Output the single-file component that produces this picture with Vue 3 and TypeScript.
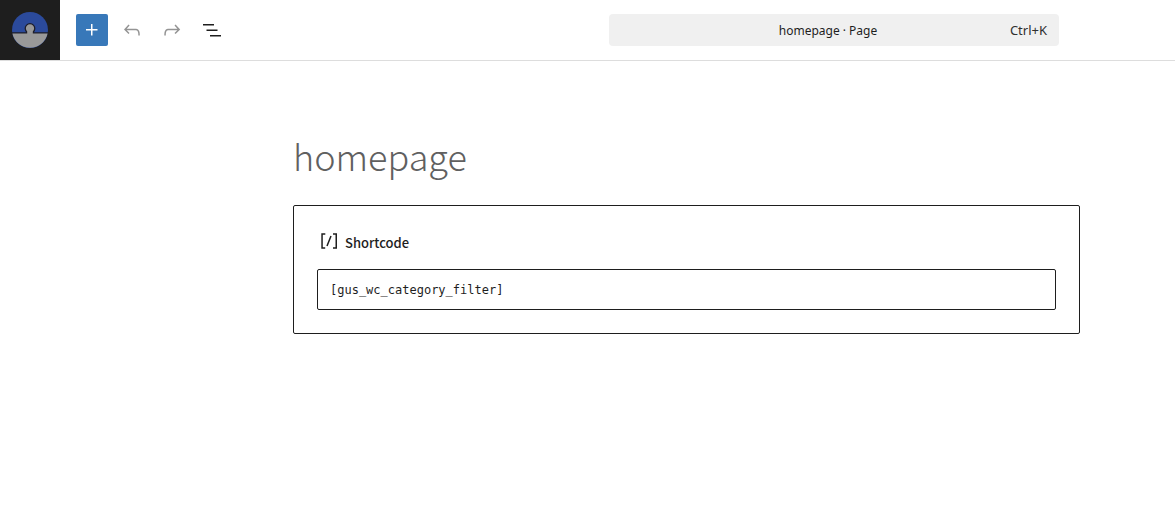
<script setup lang="ts">
import { ref } from 'vue'

const title = ref('homepage')
const shortcode = ref('[gus_wc_category_filter]')

const tools = [
  {
    label: 'Undo',
    disabled: true,
    path: 'M18.3 11.7c-.6-.6-1.4-.9-2.3-.9H6.7l2.9-3.3-1.1-1-4.5 5L8.5 16l1-1-2.7-2.7H16c.5 0 .9.2 1.3.5 1 1 1 3.4 1 4.5v.3h1.5v-.2c0-1.5 0-4.3-1.5-5.7z',
  },
  {
    label: 'Redo',
    disabled: true,
    path: 'M15.6 6.5l-1.1 1 2.9 3.3H8c-.9 0-1.7.3-2.3.9-1.4 1.5-1.4 4.2-1.4 5.6v.2h1.5v-.3c0-1.1 0-3.5 1-4.5.3-.3.7-.5 1.3-.5h9.2L14.5 15l1.1 1.1 4.6-4.6-4.6-5z',
  },
  {
    label: 'Document Overview',
    disabled: false,
    path: 'M3 6h11v1.5H3V6Zm3.5 5.5h11V13h-11v-1.5ZM21 17H10v1.5h11V17Z',
  },
]
</script>

<template>
  <div class="editor">
    <header class="bar">
      <a class="site" href="#" aria-label="View pages">
        <svg width="36" height="36" viewBox="0 0 36 36" aria-hidden="true">
          <circle cx="18" cy="18" r="18" fill="#2b4a9b" />
          <path d="M0 21.5H15.2V19.4a4.1 4.1 0 1 1 5.6 0V21.5H36" fill="none" stroke="#1e1e2a" stroke-width="2.6" />
          <path d="M.4 21.6H15.2V19.4a4.1 4.1 0 1 1 5.6 0V21.6H35.6A18 18 0 0 1 .4 21.6z" fill="#999" />
        </svg>
      </a>
      <div class="tools">
        <button class="tool add" type="button" aria-label="Block Inserter">
          <svg width="24" height="24" viewBox="0 0 24 24" aria-hidden="true">
            <path d="M11 12.5V17.5H12.5V12.5H17.5V11H12.5V6H11V11H6V12.5H11Z" />
          </svg>
        </button>
        <button v-for="tool in tools" :key="tool.label" class="tool" type="button" :aria-label="tool.label" :disabled="tool.disabled">
          <svg width="24" height="24" viewBox="0 0 24 24" aria-hidden="true">
            <path :d="tool.path" />
          </svg>
        </button>
      </div>
      <button class="command" type="button">
        <span class="document">{{ title }} · Page</span>
        <span class="shortcut">Ctrl+K</span>
      </button>
    </header>
    <main class="canvas">
      <h1 class="title">{{ title }}</h1>
      <section class="block">
        <label class="label" for="shortcode">
          <svg width="24" height="24" viewBox="0 0 24 24" aria-hidden="true">
            <path d="M16 4.2v1.5h2.5v12.5H16v1.5h4V4.2h-4zM4.2 19.8h4v-1.5H5.8V5.8h2.5V4.2h-4v15.6zm5.1-3.1l1.4.6 4-10-1.4-.6-4 10z" />
          </svg>
          <span class="name">Shortcode</span>
        </label>
        <input id="shortcode" v-model="shortcode" class="field" type="text" spellcheck="false" />
      </section>
    </main>
  </div>
</template>

<style>
body {
  margin: 0;
  background: #fff;
}
</style>

<style scoped>
.editor {
  color: #1e1e1e;
  font-family: "Noto Sans", "Open Sans", sans-serif;
  font-size: 13px;
}

.editor * {
  box-sizing: border-box;
}

.bar {
  display: flex;
  align-items: center;
  height: 61px;
  padding-right: 116px;
  border-bottom: 1px solid #ddd;
}

.site {
  display: flex;
  align-items: center;
  justify-content: center;
  width: 60px;
  height: 60px;
  background: #1e1e1e;
}

.tools {
  display: flex;
  gap: 8px;
  margin: 0 auto 0 16px;
}

.tool {
  display: flex;
  align-items: center;
  justify-content: center;
  width: 32px;
  height: 32px;
  padding: 0;
  border: 0;
  border-radius: 2px;
  background: none;
  color: #1e1e1e;
}

.tool:disabled {
  color: #949494;
}

.tool.add {
  background: #3878b9;
  color: #fff;
}

svg {
  display: block;
  fill: currentColor;
}

.command {
  display: grid;
  grid-template-columns: 1fr auto 1fr;
  align-items: center;
  width: 450px;
  height: 32px;
  padding: 0 12px 0 0;
  border: 0;
  border-radius: 4px;
  background: #f0f0f0;
  color: #1e1e1e;
  font: inherit;
}

.document {
  grid-column: 2;
  font-size: 12px;
}

.shortcut {
  justify-self: end;
  color: #2f2f2f;
}

.canvas {
  padding: 72px 95px 72px 293px;
}

.title {
  margin: 0 0 28px;
  color: #606060;
  font-family: "Noto Sans CJK SC", "Noto Sans", sans-serif;
  font-size: 36px;
  font-weight: 200;
  line-height: 44px;
}

.block {
  padding: 23px;
  border: 1px solid #1e1e1e;
  border-radius: 2px;
}

.label {
  display: flex;
  align-items: center;
  gap: 4px;
  height: 24px;
  margin-bottom: 16px;
  font-family: "Noto Sans CJK SC", "Noto Sans", sans-serif;
  font-weight: 500;
}

.name {
  padding-top: 2px;
}

.field {
  display: block;
  width: 100%;
  height: 41px;
  padding: 0 12px;
  border: 1px solid #1e1e1e;
  border-radius: 2px;
  background: #fff;
  color: #1e1e1e;
  font-family: "DejaVu Sans Mono", monospace;
  font-size: 12px;
}
</style>
